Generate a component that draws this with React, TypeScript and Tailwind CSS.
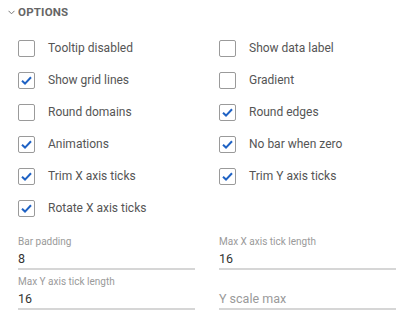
import React, { useState } from "react";

type Opt = { label: string; checked: boolean };

const options: [Opt, Opt | null][] = [
  [{ label: "Tooltip disabled", checked: false }, { label: "Show data label", checked: false }],
  [{ label: "Show grid lines", checked: true }, { label: "Gradient", checked: false }],
  [{ label: "Round domains", checked: false }, { label: "Round edges", checked: true }],
  [{ label: "Animations", checked: true }, { label: "No bar when zero", checked: true }],
  [{ label: "Trim X axis ticks", checked: true }, { label: "Trim Y axis ticks", checked: true }],
  [{ label: "Rotate X axis ticks", checked: true }, null],
];

const CheckRow: React.FC<{ opt: Opt }> = ({ opt }) => {
  const [checked, setChecked] = useState(opt.checked);
  return (
    <label className="flex h-[32px] cursor-pointer select-none items-center gap-[13px]" onClick={() => setChecked(!checked)}>
      <span className="flex h-[17px] w-[17px] items-center justify-center rounded-[2px] border-[1.5px] border-[#9a9a9a] bg-white">
        {checked && (
          <svg width="13" height="13" viewBox="0 0 13 13">
            <path d="M2 6.8 L5 9.6 L11 3.2" fill="none" stroke="#1f62c4" strokeWidth="2" />
          </svg>
        )}
      </span>
      <span className="text-[12px] text-[#555]">{opt.label}</span>
    </label>
  );
};

const Field: React.FC<{ label?: string; value?: string; placeholder?: string }> = ({ label, value, placeholder }) => (
  <div className="flex flex-col">
    <span className="h-[13px] text-[10px] leading-[13px] text-[#9a9a9a]">{label}</span>
    <span className={`mt-[3px] h-[16px] text-[12.5px] leading-[16px] ${value ? "text-[#333]" : "text-[#9a9a9a]"}`}>
      {value ?? placeholder}
    </span>
    <div className="mt-[1px] h-[1.5px] bg-[#d6d6d6]" />
  </div>
);

export default function App() {
  return (
    <div className="h-[324px] w-[410px] bg-white font-['Roboto',sans-serif]">
      <div className="flex items-center gap-[3px] pl-[8px] pt-[4px]">
        <svg width="7" height="5" viewBox="0 0 7 5">
          <path d="M0.5 0.8 L3.5 3.8 L6.5 0.8" fill="none" stroke="#777" strokeWidth="1" />
        </svg>
        <span className="text-[11.5px] font-bold tracking-[0.2px] text-[#666]">OPTIONS</span>
      </div>
      <div className="mt-[11px] grid grid-cols-[177px_177px] gap-x-[24px] pl-[18px]">
        {options.map(([l, r], i) => (
          <React.Fragment key={i}>
            <CheckRow opt={l} />
            {r ? <CheckRow opt={r} /> : <div />}
          </React.Fragment>
        ))}
      </div>
      <div className="mt-[11px] grid grid-cols-[177px_177px] gap-x-[24px] gap-y-[5.5px] pl-[18px]">
        <Field label="Bar padding" value="8" />
        <Field label="Max X axis tick length" value="16" />
        <Field label="Max Y axis tick length" value="16" />
        <Field placeholder="Y scale max" />
      </div>
    </div>
  );
}
